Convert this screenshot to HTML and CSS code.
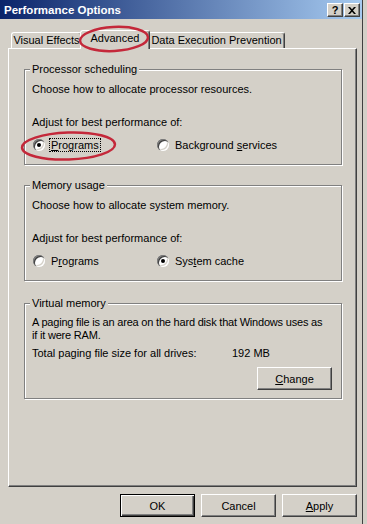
FILE: index.html
```html
<!DOCTYPE html>
<html>
<head>
<meta charset="utf-8">
<link rel="stylesheet" href="styles.css">
</head>
<body>
<div class="window">
  <div class="titlebar">
    <span class="title">Performance Options</span>
    <div class="tbtns">
      <span class="tbtn help">?</span>
      <span class="tbtn close"><svg width="8" height="7" viewBox="0 0 8 7"><path d="M0 0h2l2 2.2L6 0h2L5 3.5 8 7H6L4 4.8 2 7H0l3-3.5z" fill="#000"/></svg></span>
    </div>
  </div>

  <div class="tabs">
    <div class="tab tab-ve">Visual Effects</div>
    <div class="tab tab-adv sel">Advanced</div>
    <div class="tab tab-dep">Data Execution Prevention</div>
  </div>

  <div class="panel">
    <fieldset class="group g1">
      <legend>Processor scheduling</legend>
      <p class="desc">Choose how to allocate processor resources.</p>
      <p class="adjust">Adjust for best performance of:</p>
      <div class="radios">
        <div class="opt"><span class="radio on"></span><span class="lbl focus"><u>P</u>rograms</span></div>
        <div class="opt"><span class="radio"></span><span class="lbl">Background <u>s</u>ervices</span></div>
      </div>
    </fieldset>

    <fieldset class="group g2">
      <legend>Memory usage</legend>
      <p class="desc">Choose how to allocate system memory.</p>
      <p class="adjust">Adjust for best performance of:</p>
      <div class="radios">
        <div class="opt"><span class="radio"></span><span class="lbl">P<u>r</u>ograms</span></div>
        <div class="opt"><span class="radio on"></span><span class="lbl">Sys<u>t</u>em cache</span></div>
      </div>
    </fieldset>

    <fieldset class="group g3">
      <legend>Virtual memory</legend>
      <p class="desc2">A paging file is an area on the hard disk that Windows uses as<br>if it were RAM.</p>
      <div class="total"><span>Total paging file size for all drives:</span><span>192 MB</span></div>
      <div class="change-row"><button class="btn"><u>C</u>hange</button></div>
    </fieldset>
  </div>

  <div class="buttons">
    <button class="btn default">OK</button>
    <button class="btn">Cancel</button>
    <button class="btn"><u>A</u>pply</button>
  </div>

  <svg class="marks" width="367" height="524" viewBox="0 0 367 524">
    <ellipse cx="114" cy="39" rx="34" ry="12" transform="rotate(-3 114 39)" fill="none" stroke="#c4283a" stroke-width="2.5"/>
    <ellipse cx="68.5" cy="146" rx="46.5" ry="13.5" transform="rotate(-2 68.5 146)" fill="none" stroke="#c4283a" stroke-width="2.5"/>
  </svg>
</div>
</body>
</html>
```

FILE: styles.css
```css
html, body {
  margin: 0;
  padding: 0;
}
body {
  width: 367px;
  height: 524px;
  overflow: hidden;
  background: #d4d0c8;
  font-family: "Liberation Sans", Arial, sans-serif;
  font-size: 11px;
  color: #000;
}
.window {
  position: relative;
  width: 363px;
  height: 524px;
  border-right: 1px solid #404040;
  box-sizing: border-box;
}
.titlebar {
  width: 362px;
  height: 19px;
  display: flex;
  align-items: flex-start;
  justify-content: space-between;
  background: linear-gradient(to right, #0a246a, #a6caf0);
  box-sizing: border-box;
  padding: 3px 2px 0 4px;
}
.title {
  color: #fff;
  font-weight: bold;
  font-size: 11.5px;
  line-height: 15px;
}
.tbtns {
  display: flex;
  gap: 1px;
}
.tbtn {
  width: 16px;
  height: 14px;
  box-sizing: border-box;
  background: #d4d0c8;
  border: 1px solid;
  border-color: #fff #404040 #404040 #fff;
  box-shadow: inset -1px -1px 0 #808080;
  display: flex;
  align-items: center;
  justify-content: center;
  font-weight: bold;
  font-size: 11px;
  line-height: 12px;
}
.tbtn.close svg { display: block; margin-right: 1px; }
.tabs {
  position: relative;
  z-index: 2;
  display: flex;
  align-items: flex-end;
  height: 18px;
  margin: 11px 0 0 11px;
}
.tab {
  height: 16px;
  box-sizing: border-box;
  background: #d4d0c8;
  border: 1px solid;
  border-bottom: none;
  border-color: #fff #404040 #404040 #fff;
  border-radius: 3px 3px 0 0;
  box-shadow: inset -1px 0 0 #808080;
  text-align: center;
  line-height: 15px;
  white-space: nowrap;
}
.tab-ve { width: 71px; }
.tab-adv { width: 66px; }
.tab-dep { width: 137px; }
.tab.sel {
  position: relative;
  z-index: 3;
  width: 70px;
  height: 19px;
  margin: 0 -2px -1px -2px;
  line-height: 14px;
  padding-bottom: 4px;
}
.panel {
  position: relative;
  z-index: 1;
  margin-left: 8px;
  width: 349px;
  height: 439px;
  box-sizing: border-box;
  border: 1px solid;
  border-color: #fff #404040 #404040 #fff;
  box-shadow: inset -1px -1px 0 #808080;
  padding: 14px 15px 0;
}
.group {
  width: 318px;
  box-sizing: border-box;
  margin: 0;
  padding: 0 7px 13px;
  border: 1px solid #808080;
  box-shadow: 1px 1px 0 #fff, inset 1px 1px 0 #fff;
  min-inline-size: 0;
}
.group legend {
  padding: 0 2px;
  margin-left: -2px;
  line-height: 13px;
  background: #d4d0c8;
}
.group p {
  margin: 0;
  line-height: 13px;
}
.g2 { margin-top: 14px; }
.g3 { margin-top: 16px; padding-bottom: 8px; }
.desc { margin-top: 7px !important; }
.adjust { margin-top: 20px !important; }
.radios {
  display: grid;
  grid-template-columns: 124px auto;
  margin-top: 9px;
  height: 13px;
  align-items: center;
}
.opt {
  display: flex;
  align-items: center;
  margin-left: 1px;
}
.radio {
  position: relative;
  width: 12px;
  height: 12px;
  border-radius: 50%;
  background: #fff;
  box-shadow: inset 1px 1px 0 #808080, inset 2px 2px 0 #404040, inset -1px -1px 0 #fff, inset -2px -2px 0 #d4d0c8;
  flex: none;
}
.radio.on::after {
  content: "";
  position: absolute;
  left: 4px;
  top: 4px;
  width: 4px;
  height: 4px;
  border-radius: 50%;
  background: #000;
}
.lbl {
  margin-left: 4px;
  padding: 0 1px 0 1px;
  border: 1px dotted transparent;
  line-height: 12px;
}
.lbl.focus {
  border-color: #000;
}
.desc2 {
  margin: 6px -4px 0 0 !important;
  line-height: 13px;
  letter-spacing: -0.2px;
  white-space: nowrap;
}
.total {
  display: grid;
  grid-template-columns: 200px auto;
  margin-top: 5px;
  line-height: 13px;
}
.change-row {
  display: flex;
  justify-content: flex-end;
  margin-top: 7px;
  margin-right: 2px;
}
.btn {
  width: 75px;
  height: 23px;
  box-sizing: border-box;
  background: #d4d0c8;
  border: 1px solid;
  border-color: #fff #404040 #404040 #fff;
  box-shadow: inset -1px -1px 0 #808080;
  font-family: "Liberation Sans", Arial, sans-serif;
  font-size: 11px;
  color: #000;
  padding: 0;
  margin: 0;
}
.btn.default {
  border: 1px solid #000;
  box-shadow: inset 1px 1px 0 #fff, inset -1px -1px 0 #404040, inset -2px -2px 0 #808080;
}
.buttons {
  display: flex;
  justify-content: flex-end;
  gap: 6px;
  margin: 7px 0 0 8px;
  width: 349px;
}
.marks {
  position: absolute;
  left: 0;
  top: 0;
  z-index: 5;
  pointer-events: none;
}
```
